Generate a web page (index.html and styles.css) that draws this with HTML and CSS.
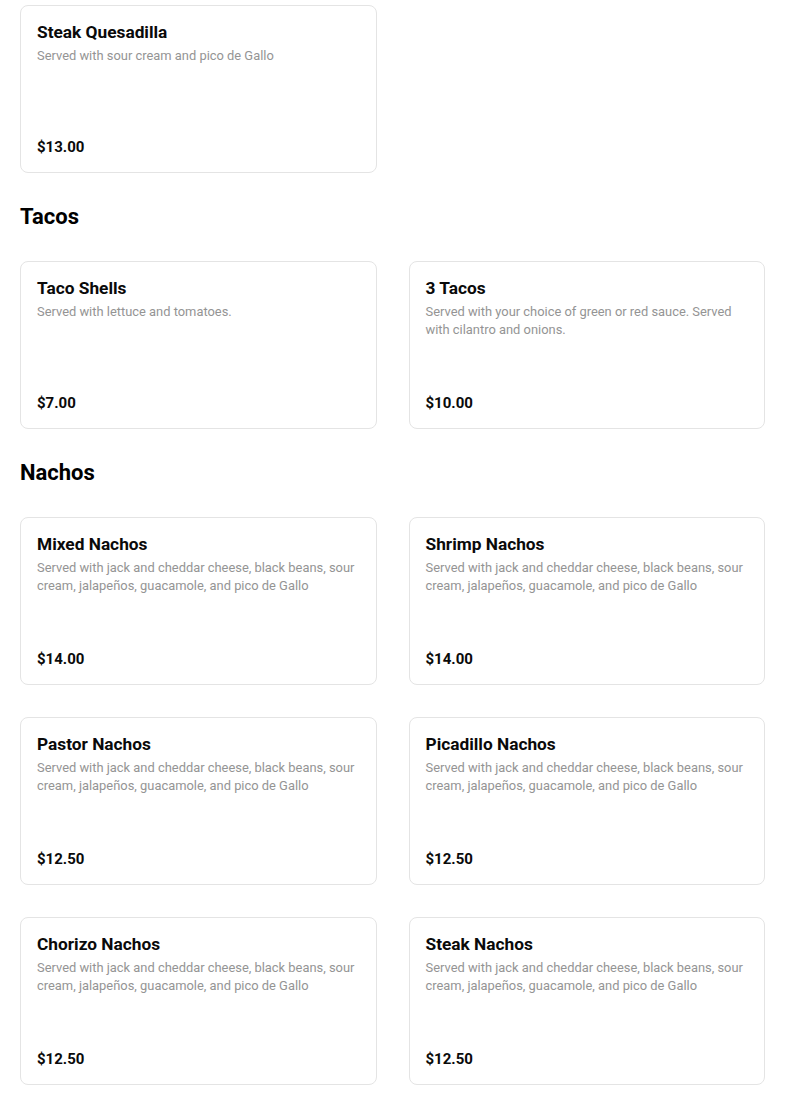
FILE: index.html
```html
<!DOCTYPE html>
<html>
<head>
<meta charset="utf-8">
<link rel="stylesheet" href="styles.css">
</head>
<body>
<main class="menu">
  <section class="grid">
    <article class="card">
      <div class="info">
        <h3 class="name">Steak Quesadilla</h3>
        <p class="desc">Served with sour cream and pico de Gallo</p>
      </div>
      <div class="price">$13.00</div>
    </article>
  </section>

  <h2 class="cat">Tacos</h2>
  <section class="grid">
    <article class="card">
      <div class="info">
        <h3 class="name">Taco Shells</h3>
        <p class="desc">Served with lettuce and tomatoes.</p>
      </div>
      <div class="price">$7.00</div>
    </article>
    <article class="card">
      <div class="info">
        <h3 class="name">3 Tacos</h3>
        <p class="desc">Served with your choice of green or red sauce. Served with cilantro and onions.</p>
      </div>
      <div class="price">$10.00</div>
    </article>
  </section>

  <h2 class="cat">Nachos</h2>
  <section class="grid">
    <article class="card">
      <div class="info">
        <h3 class="name">Mixed Nachos</h3>
        <p class="desc">Served with jack and cheddar cheese, black beans, sour cream, jalapeños, guacamole, and pico de Gallo</p>
      </div>
      <div class="price">$14.00</div>
    </article>
    <article class="card">
      <div class="info">
        <h3 class="name">Shrimp Nachos</h3>
        <p class="desc">Served with jack and cheddar cheese, black beans, sour cream, jalapeños, guacamole, and pico de Gallo</p>
      </div>
      <div class="price">$14.00</div>
    </article>
    <article class="card">
      <div class="info">
        <h3 class="name">Pastor Nachos</h3>
        <p class="desc">Served with jack and cheddar cheese, black beans, sour cream, jalapeños, guacamole, and pico de Gallo</p>
      </div>
      <div class="price">$12.50</div>
    </article>
    <article class="card">
      <div class="info">
        <h3 class="name">Picadillo Nachos</h3>
        <p class="desc">Served with jack and cheddar cheese, black beans, sour cream, jalapeños, guacamole, and pico de Gallo</p>
      </div>
      <div class="price">$12.50</div>
    </article>
    <article class="card">
      <div class="info">
        <h3 class="name">Chorizo Nachos</h3>
        <p class="desc">Served with jack and cheddar cheese, black beans, sour cream, jalapeños, guacamole, and pico de Gallo</p>
      </div>
      <div class="price">$12.50</div>
    </article>
    <article class="card">
      <div class="info">
        <h3 class="name">Steak Nachos</h3>
        <p class="desc">Served with jack and cheddar cheese, black beans, sour cream, jalapeños, guacamole, and pico de Gallo</p>
      </div>
      <div class="price">$12.50</div>
    </article>
  </section>
</main>
</body>
</html>
```
FILE: styles.css
```css
* { box-sizing: border-box; }
html, body { margin: 0; padding: 0; background: #fff; }
body {
  font-family: Roboto, "Liberation Sans", Arial, sans-serif;
  color: #111;
}
.menu {
  padding: 5px 20px 20px 20px;
}
.grid {
  display: grid;
  grid-template-columns: 1fr 1fr;
  column-gap: 32px;
  row-gap: 32px;
}
.card {
  border: 1px solid #e4e4e4;
  border-radius: 8px;
  min-height: 168px;
  padding: 15px 16px 15px 16px;
  display: flex;
  flex-direction: column;
  justify-content: space-between;
  background: #fff;
}
.name {
  margin: 0;
  font-size: 17.3px;
  font-weight: 700;
  line-height: 22px;
  color: #0a0a0a;
}
.desc {
  margin: 4px 0 0 0;
  font-size: 12.9px;
  line-height: 18px;
  color: #949494;
}
.price {
  font-size: 15px;
  font-weight: 700;
  line-height: 20px;
  color: #0a0a0a;
}
.cat {
  margin: 30px 0 30px 0;
  font-size: 22px;
  font-weight: 700;
  line-height: 28px;
  color: #000;
}
```
